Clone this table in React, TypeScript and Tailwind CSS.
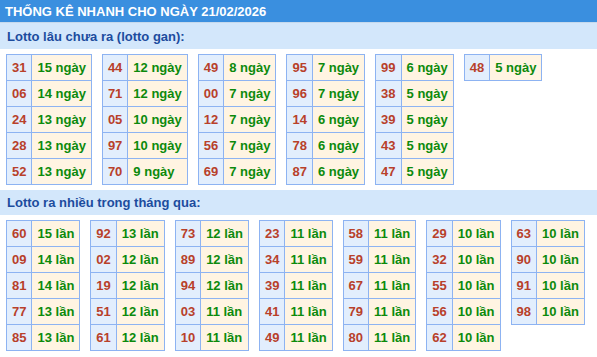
import React from "react";

type Item = [string, string];

const gan: Item[][] = [
  [["31", "15 ngày"], ["06", "14 ngày"], ["24", "13 ngày"], ["28", "13 ngày"], ["52", "13 ngày"]],
  [["44", "12 ngày"], ["71", "12 ngày"], ["05", "10 ngày"], ["97", "10 ngày"], ["70", "9 ngày"]],
  [["49", "8 ngày"], ["00", "7 ngày"], ["12", "7 ngày"], ["56", "7 ngày"], ["69", "7 ngày"]],
  [["95", "7 ngày"], ["96", "7 ngày"], ["14", "6 ngày"], ["78", "6 ngày"], ["87", "6 ngày"]],
  [["99", "6 ngày"], ["38", "5 ngày"], ["39", "5 ngày"], ["43", "5 ngày"], ["47", "5 ngày"]],
  [["48", "5 ngày"]],
];

const nhieu: Item[][] = [
  [["60", "15 lần"], ["09", "14 lần"], ["81", "14 lần"], ["77", "13 lần"], ["85", "13 lần"]],
  [["92", "13 lần"], ["02", "12 lần"], ["19", "12 lần"], ["51", "12 lần"], ["61", "12 lần"]],
  [["73", "12 lần"], ["89", "12 lần"], ["94", "12 lần"], ["03", "11 lần"], ["10", "11 lần"]],
  [["23", "11 lần"], ["34", "11 lần"], ["39", "11 lần"], ["41", "11 lần"], ["49", "11 lần"]],
  [["58", "11 lần"], ["59", "11 lần"], ["67", "11 lần"], ["79", "11 lần"], ["80", "11 lần"]],
  [["29", "10 lần"], ["32", "10 lần"], ["55", "10 lần"], ["56", "10 lần"], ["62", "10 lần"]],
  [["63", "10 lần"], ["90", "10 lần"], ["91", "10 lần"], ["98", "10 lần"]],
];

function Block({ rows }: { rows: Item[] }) {
  return (
    <div className="border-l border-t border-[#8db3f2]">
      {rows.map(([n, v], i) => (
        <div key={i} className="flex h-[26px]">
          <div className="flex items-center justify-center px-[5px] bg-[#e2eefd] text-[#b8402a] border-r border-b border-[#8db3f2]">
            {n}
          </div>
          <div className="flex flex-1 items-center px-[5px] bg-[#fff4e2] text-[#0c8a0c] border-r border-b border-[#8db3f2]">
            {v}
          </div>
        </div>
      ))}
    </div>
  );
}

function Section({ title, blocks, barH }: { title: string; blocks: Item[][]; barH: string }) {
  return (
    <div>
      <div className={`${barH} flex items-center px-[7px] bg-[#d3e7fb] text-[#1c4c9e]`}>{title}</div>
      <div className="flex items-start gap-x-[10px] pl-[6px] pt-[5px] pb-[5px]">
        {blocks.map((b, i) => (
          <Block key={i} rows={b} />
        ))}
      </div>
    </div>
  );
}

export default function App() {
  return (
    <div
      className="w-[597px] h-[357px] bg-white font-bold text-[13px] leading-none overflow-hidden"
      style={{ fontFamily: '"Liberation Sans", Arial, sans-serif' }}
    >
      <div className="h-[23px] flex items-center px-[5px] bg-[#3a8fdf] text-white border-b border-[#c6d9ec]">
        THỐNG KÊ NHANH CHO NGÀY 21/02/2026
      </div>
      <Section title="Lotto lâu chưa ra (lotto gan):" blocks={gan} barH="h-[26px]" />
      <Section title="Lotto ra nhiều trong tháng qua:" blocks={nhieu} barH="h-[25px]" />
    </div>
  );
}
